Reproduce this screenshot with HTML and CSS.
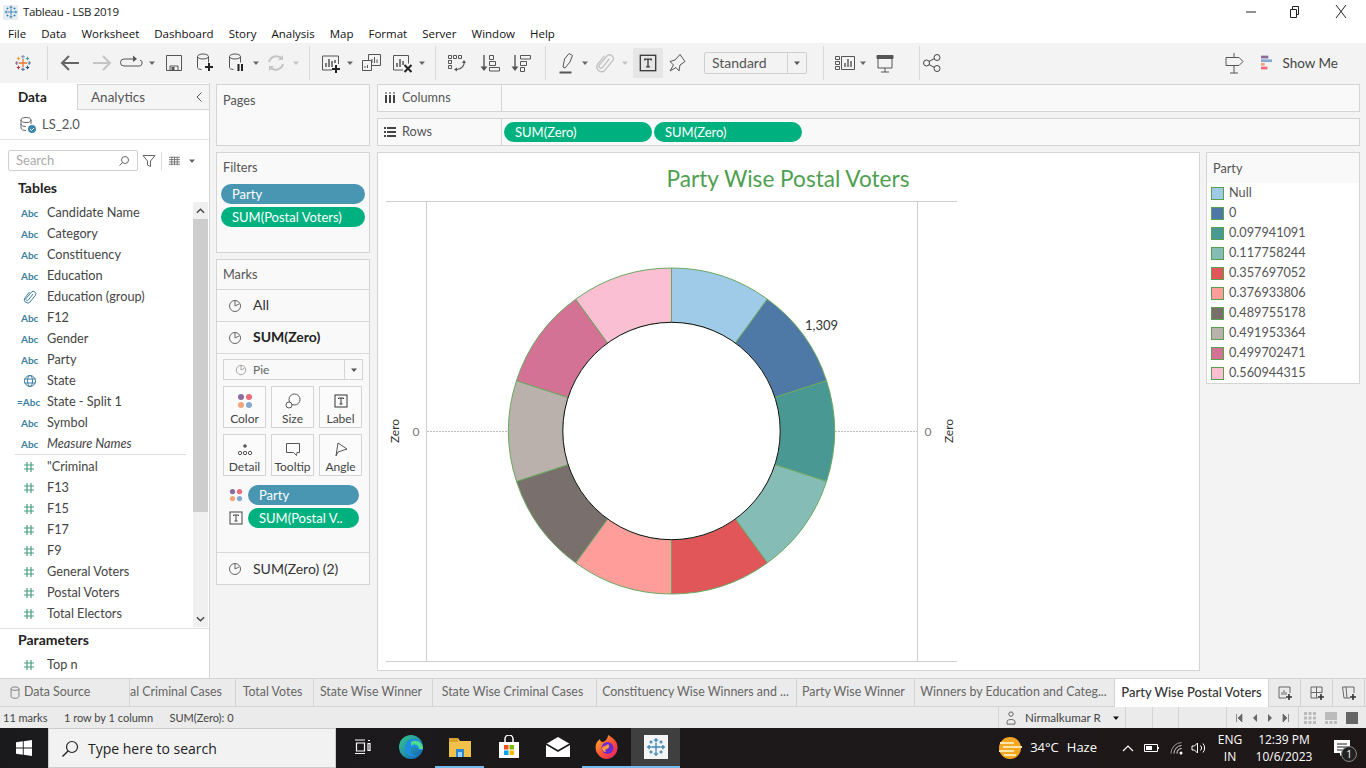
FILE: index.html
```html
<!DOCTYPE html>
<html lang="en">
<head>
<meta charset="utf-8">
<title>Tableau - LSB 2019</title>
<link rel="stylesheet" href="styles.css">
</head>
<body>
<svg class="sprite" aria-hidden="true">
  <symbol id="pie" viewBox="0 0 14 14"><circle cx="7" cy="7" r="5.5" fill="none" stroke="currentColor"/><path d="M7 7V1.5M7 7l4-2" fill="none" stroke="currentColor"/></symbol>
  <symbol id="label-t" viewBox="0 0 14 14"><rect x="1" y="1" width="12" height="12" fill="none" stroke="currentColor"/><path d="M4.5 5V4h5v1M7 4v6M5.5 10h3" fill="none" stroke="currentColor"/></symbol>
  <symbol id="dots" viewBox="0 0 16 16"><circle cx="4" cy="4" r="3" fill="#8a6c9f"/><circle cx="12" cy="4" r="3" fill="#ee6b7b"/><circle cx="4" cy="12" r="3" fill="#f1a57c"/><circle cx="12" cy="12" r="3" fill="#86a9d0"/></symbol>
  <symbol id="hash" viewBox="0 0 12 12"><path d="M4 1v10M8 1v10M1 4h10M1 8h10" fill="none" stroke="#4a9e80" stroke-width="1.2"/></symbol>
  <symbol id="clip" viewBox="0 0 14 14"><path d="M10 4 5.200 10.200a1.400 1.400 0 0 1-2.200-1.700L8.500 2a2.600 2.600 0 0 1 4 3.200L7 12a3.300 3.300 0 0 1-5.200-4L6.500 2" fill="none" stroke="currentColor"/></symbol>
  <symbol id="caret" viewBox="0 0 8 8"><path d="M1 2.500h6L4 6z" fill="currentColor"/></symbol>
  <symbol id="blue-logo" viewBox="0 0 16 16"><path d="M8 4.500v7M4.500 8h7M8 .8v3.400M6.300 2.500h3.400M8 11.800v3.400M6.300 13.500h3.400M2.500 6.300v3.400M.8 8h3.400M13.500 6.300v3.400M11.800 8h3.400M4 2.800v2.400M2.800 4h2.400M12 2.800v2.400M10.800 4h2.400M4 10.800v2.400M2.800 12h2.400M12 10.800v2.400M10.800 12h2.400" fill="none" stroke="#3d87b5" stroke-width="1.100"/></symbol>
  <symbol id="cyl" viewBox="0 0 12 16"><ellipse cx="6" cy="3" rx="4.500" ry="2" fill="none" stroke="currentColor"/><path d="M1.500 3v9c0 1.200 2 2 4.500 2s4.500-.8 4.500-2V3" fill="none" stroke="currentColor"/></symbol>
</svg>

<header class="titlebar">
  <span class="title-tile"><svg class="title-logo"><use href="#blue-logo"/></svg></span>
  <span class="title-text">Tableau - LSB 2019</span>
  <div class="win-controls">
    <svg class="win-btn" viewBox="0 0 46 24"><path d="M18 12h10" stroke="#222"/></svg>
    <svg class="win-btn" viewBox="0 0 46 24"><path d="M16.500 9.500h6v8h-6zM18.500 9.500v-3h6v8h-2" fill="none" stroke="#222"/></svg>
    <svg class="win-btn" viewBox="0 0 46 24"><path d="M16 5l10 13M26 5 16 18" stroke="#222" fill="none"/></svg>
  </div>
</header>

<nav class="menubar">
  <span>File</span><span>Data</span><span>Worksheet</span><span>Dashboard</span><span>Story</span><span>Analysis</span><span>Map</span><span>Format</span><span>Server</span><span>Window</span><span>Help</span>
</nav>

<div class="toolbar">
  <div class="tg tg-a">
    <svg class="ic18" viewBox="0 0 18 18"><path d="M9 5v8M5 9h8" stroke="#e8762c" stroke-width="1.300" fill="none"/><path d="M9 1v3.400M7.200 2.700h3.600" stroke="#7f9db9" stroke-width="1.200" fill="none"/><path d="M9 13.600V17M7.200 15.300h3.600" stroke="#5b7fa8" stroke-width="1.200" fill="none"/><path d="M2.700 7.200v3.600M1 9h3.400" stroke="#8a6c9f" stroke-width="1.200" fill="none"/><path d="M15.300 7.200v3.600M13.600 9H17" stroke="#5b7fa8" stroke-width="1.200" fill="none"/><path d="M4.500 2.800v3.400M2.800 4.500h3.400" stroke="#f0a04b" stroke-width="1.200" fill="none"/><path d="M13.500 2.800v3.400M11.800 4.500h3.400" stroke="#4a9e9e" stroke-width="1.200" fill="none"/><path d="M4.500 11.800v3.400M2.800 13.500h3.400" stroke="#c7303e" stroke-width="1.200" fill="none"/><path d="M13.500 11.800v3.400M11.800 13.500h3.400" stroke="#2a4f7f" stroke-width="1.200" fill="none"/></svg>
  </div>
  <div class="tg tg-b">
    <span class="slot w32"><svg class="ic24" viewBox="0 0 24 24"><path d="M21 12H5M11 5l-7 7 7 7" fill="none" stroke="#666" stroke-width="2"/></svg></span>
    <span class="slot w32"><svg class="ic24" viewBox="0 0 24 24"><path d="M3 12h16M13 5l7 7-7 7" fill="none" stroke="#c4c4c4" stroke-width="2"/></svg></span>
    <span class="slot w26"><svg class="ic24" viewBox="0 0 24 24"><path d="M15 8H5a3 3 0 0 0 0 7h14a3 3 0 0 0 2-6" fill="none" stroke="#555"/><path d="M14 4.500 18 8l-4 3z" fill="#555"/></svg></span>
    <span class="slot w16 car"><svg class="ic8"><use href="#caret"/></svg></span>
    <span class="slot w28"><svg class="ic24" viewBox="0 0 24 24"><path d="M4.500 4.500h15v15h-15zM8 19v-4h8v4" fill="#f3f3f3" stroke="#555"/><rect x="9.500" y="16" width="3" height="3" fill="#555"/></svg></span>
    <span class="slot w34"><svg class="ic24" viewBox="0 0 24 24"><ellipse cx="10" cy="5.500" rx="5.500" ry="2.500" fill="none" stroke="#555"/><path d="M4.500 5.500v11c0 1 1.500 2 4 2M15.500 5.500v6" fill="none" stroke="#555"/><path d="M16 12v8M12 16h8" stroke="#222" stroke-width="2"/></svg></span>
    <span class="slot w30"><svg class="ic24" viewBox="0 0 24 24"><ellipse cx="10" cy="5.500" rx="5.500" ry="2.500" fill="none" stroke="#555"/><path d="M4.500 5.500v11c0 1 1.500 2 4 2M15.500 5.500v6" fill="none" stroke="#555"/><path d="M13.500 13v7M17 13v7" stroke="#222" stroke-width="2"/></svg></span>
    <span class="slot w8 car"><svg class="ic8"><use href="#caret"/></svg></span>
    <span class="slot w32"><svg class="ic24" viewBox="0 0 24 24"><path d="M5 11a7.500 7.500 0 0 1 13-3M19 13a7.500 7.500 0 0 1-13 3" fill="none" stroke="#c4c4c4" stroke-width="2"/><path d="M19 4v5h-5M5 20v-5h5" fill="#c4c4c4"/></svg></span>
    <span class="slot w8 car-off"><svg class="ic8"><use href="#caret"/></svg></span>
  </div>
  <div class="tg tg-c">
    <span class="slot w32"><svg class="ic24" viewBox="0 0 24 24"><path d="M14 19H4.500V5h16v8" fill="none" stroke="#555"/><path d="M8 16v-4M11 16V8M14 16v-6M17 12V9" stroke="#555" stroke-width="1.500"/><path d="M18 14v8M14 18h8" stroke="#222" stroke-width="2"/></svg></span>
    <span class="slot w8 car"><svg class="ic8"><use href="#caret"/></svg></span>
    <span class="slot w34"><svg class="ic24" viewBox="0 0 24 24"><path d="M9.500 3.500h12v11h-12z" fill="#f3f3f3" stroke="#555"/><path d="M3.500 9.500h9v10h-9z" fill="#f3f3f3" stroke="#555"/><path d="M13 12V8M15.500 12V6M18 12V8.500M6 17v-2M8.500 17v-3" stroke="#555"/></svg></span>
    <span class="slot w28"><svg class="ic24" viewBox="0 0 24 24"><path d="M13 19H3.500V4.500h15v8" fill="none" stroke="#555"/><path d="M7 16v-4M10 16V8M13 14v-4" stroke="#555" stroke-width="1.500"/><path d="m14.500 14 7 7M21.500 14l-7 7" stroke="#222" stroke-width="2"/></svg></span>
    <span class="slot w12 car"><svg class="ic8"><use href="#caret"/></svg></span>
  </div>
  <div class="tg tg-d">
    <span class="slot w32"><svg class="ic24" viewBox="0 0 24 24"><path d="M3.500 4.500h3v3h-3zM8.500 4.500h3v3h-3zM13.500 4.500h3v3h-3zM3.500 9.500h3v3h-3zM3.500 14.500h3v3h-3z" fill="none" stroke="#555"/><path d="M19 10c1 4-2 8-7 8.500" fill="none" stroke="#555" stroke-width="1.200"/><path d="m17 12 2-3 2 3zM12 16.500v4l-3-2z" fill="#555"/></svg></span>
    <span class="slot w34"><svg class="ic24" viewBox="0 0 24 24"><path d="M6 4v13" fill="none" stroke="#555" stroke-width="1.400"/><path d="M2.500 15.500h7L6 20z" fill="#555"/><path d="M11.500 4.500h4v4h-4zM11.500 10.500h6v4h-6zM11.500 16.500h10v3.500h-10z" fill="none" stroke="#555"/></svg></span>
    <span class="slot w28"><svg class="ic24" viewBox="0 0 24 24"><path d="M6 4v13" fill="none" stroke="#555" stroke-width="1.400"/><path d="M2.500 15.500h7L6 20z" fill="#555"/><path d="M11.500 4.500h10v3.500h-10zM11.500 10.500h6v4h-6zM11.500 16.500h4v4h-4z" fill="none" stroke="#555"/></svg></span>
  </div>
  <div class="tg tg-e">
    <span class="slot w24"><svg class="ic24" viewBox="0 0 24 24"><path d="M7 16 8.500 8 13 2.500 16.500 4.500 14 11l-5 6z" fill="none" stroke="#555"/><path d="M3.500 21.500h12" stroke="#555" stroke-width="2"/></svg></span>
    <span class="slot w10 car"><svg class="ic8"><use href="#caret"/></svg></span>
    <span class="slot w30"><svg class="ic20 off" viewBox="0 0 14 14"><use href="#clip"/></svg></span>
    <span class="slot w10 car-off"><svg class="ic8"><use href="#caret"/></svg></span>
    <span class="slot w30 t-active"><svg class="ic18 dark" viewBox="0 0 14 14"><use href="#label-t"/></svg></span>
    <span class="slot w28"><svg class="ic24" viewBox="0 0 24 24"><path d="M15 3.500 10 9l-5 1.500 3.500 3.500L5 20l6-3.500 3 3.500 1-6 5-3.500z" fill="none" stroke="#555"/></svg></span>
    <div class="std-select"><span class="std-text">Standard</span><span class="std-caret"><svg class="ic8"><use href="#caret"/></svg></span></div>
  </div>
  <div class="tg tg-f">
    <span class="slot w26"><svg class="ic24" viewBox="0 0 24 24"><path d="M2.500 5.500h4v3h-4zM2.500 10.500h4v3h-4zM2.500 15.500h4v3h-4zM8.500 5.500h13v13h-13z" fill="none" stroke="#555"/><path d="M12 16v-4M15 16V8M18 16v-6" stroke="#555" stroke-width="1.400"/></svg></span>
    <span class="slot w10 car"><svg class="ic8"><use href="#caret"/></svg></span>
    <span class="slot w34"><svg class="ic24" viewBox="0 0 24 24"><path d="M4 4.500h16v3H4z" fill="#555" stroke="#555"/><path d="M5 7v10h14V7M12 17v4M8 21h8" fill="none" stroke="#555"/></svg></span>
  </div>
  <div class="tg tg-g">
    <span class="slot w24"><svg class="ic24" viewBox="0 0 24 24"><circle cx="6.500" cy="12" r="3" fill="none" stroke="#444"/><circle cx="17" cy="6.500" r="3" fill="none" stroke="#444"/><circle cx="17" cy="17.500" r="3" fill="none" stroke="#444"/><path d="M9 10.500l5.500-3M9 13.500l5.500 3" stroke="#444"/></svg></span>
  </div>
  <div class="tg-right">
    <span class="slot w26"><svg class="ic24" viewBox="0 0 24 24"><path d="M4 6.500h13l4 4-4 4H4zM12 2v4.500M12 14.500V22M8 22h8" fill="none" stroke="#555"/></svg></span>
    <svg class="showme-ic" viewBox="0 0 12 16"><rect x="0" width="8" height="3" fill="#8a6c9f"/><rect y="4" width="12" height="3" fill="#86a9d0"/><rect y="8" width="4" height="3" fill="#f1a57c"/><rect y="12" width="7" height="3" fill="#ee6b7b"/></svg>
    <span class="showme">Show Me</span>
  </div>
</div>

<main class="main">
  <aside class="sidebar">
    <div class="side-tabs">
      <div class="tab-data">Data</div>
      <div class="tab-analytics"><span>Analytics</span><svg class="chev" viewBox="0 0 8 12"><path d="M6.500 1.500 2 6l4.500 4.500" fill="none" stroke="#555"/></svg></div>
    </div>
    <div class="ds-row">
      <svg class="ds-ic" viewBox="0 0 18 18"><ellipse cx="7" cy="4" rx="5" ry="2.500" fill="none" stroke="#666"/><path d="M2 4v8c0 1.500 2 2.500 5 2.500M12 4v4M2 8c0 1.500 2 2.500 5 2.500" fill="none" stroke="#666"/><circle cx="13" cy="13" r="4" fill="#3f86ad"/><path d="m11 13 1.500 1.500L15 12" stroke="#fff" fill="none"/></svg>
      <span>LS_2.0</span>
    </div>
    <div class="search-row">
      <div class="search-box"><span>Search</span><svg class="search-ic" viewBox="0 0 12 12"><circle cx="7" cy="5" r="3.500" fill="none" stroke="#666"/><path d="M4.500 7.500 1.500 10.500" stroke="#666"/></svg></div>
      <svg class="funnel" viewBox="0 0 14 14"><path d="M1 1.500h12L8.500 7v5.500l-3-1.500V7z" fill="none" stroke="#666"/></svg>
      <span class="search-sep"></span>
      <svg class="list-ic" viewBox="0 0 14 10"><path d="M1 1h12M1 3.500h12M1 6h12M1 8.500h12M4 .5v9M7 .5v9M10 .5v9" stroke="#666" stroke-width=".9" fill="none"/></svg>
      <svg class="ic8 car"><use href="#caret"/></svg>
    </div>
    <h2 class="side-head">Tables</h2>
    <div class="fields-wrap">
      <div class="fields">
        <div class="field"><span class="abc">Abc</span><span>Candidate Name</span></div>
        <div class="field"><span class="abc">Abc</span><span>Category</span></div>
        <div class="field"><span class="abc">Abc</span><span>Constituency</span></div>
        <div class="field"><span class="abc">Abc</span><span>Education</span></div>
        <div class="field"><span class="ftype"><svg class="ic14 blue" viewBox="0 0 14 14"><use href="#clip"/></svg></span><span>Education (group)</span></div>
        <div class="field"><span class="abc">Abc</span><span>F12</span></div>
        <div class="field"><span class="abc">Abc</span><span>Gender</span></div>
        <div class="field"><span class="abc">Abc</span><span>Party</span></div>
        <div class="field"><span class="ftype"><svg class="ic14" viewBox="0 0 14 14"><circle cx="7" cy="7" r="5.500" fill="none" stroke="#3d7f9e"/><ellipse cx="7" cy="7" rx="2.500" ry="5.500" fill="none" stroke="#3d7f9e"/><path d="M1.500 5h11M1.500 9h11" stroke="#3d7f9e"/></svg></span><span>State</span></div>
        <div class="field"><span class="abc abc-calc">=Abc</span><span>State - Split 1</span></div>
        <div class="field"><span class="abc">Abc</span><span>Symbol</span></div>
        <div class="field"><span class="abc">Abc</span><em>Measure Names</em></div>
        <div class="field-hr"></div>
        <div class="field"><span class="ftype"><svg class="ic12"><use href="#hash"/></svg></span><span>"Criminal</span></div>
        <div class="field"><span class="ftype"><svg class="ic12"><use href="#hash"/></svg></span><span>F13</span></div>
        <div class="field"><span class="ftype"><svg class="ic12"><use href="#hash"/></svg></span><span>F15</span></div>
        <div class="field"><span class="ftype"><svg class="ic12"><use href="#hash"/></svg></span><span>F17</span></div>
        <div class="field"><span class="ftype"><svg class="ic12"><use href="#hash"/></svg></span><span>F9</span></div>
        <div class="field"><span class="ftype"><svg class="ic12"><use href="#hash"/></svg></span><span>General Voters</span></div>
        <div class="field"><span class="ftype"><svg class="ic12"><use href="#hash"/></svg></span><span>Postal Voters</span></div>
        <div class="field"><span class="ftype"><svg class="ic12"><use href="#hash"/></svg></span><span>Total Electors</span></div>
      </div>
      <div class="scrollbar">
        <div class="sb-btn"><svg class="sb-ic" viewBox="0 0 10 6"><path d="M1 5l4-4 4 4" fill="none" stroke="#444" stroke-width="1.500"/></svg></div>
        <div class="sb-thumb"></div>
        <div class="sb-track"></div>
        <div class="sb-btn"><svg class="sb-ic" viewBox="0 0 10 6"><path d="M1 1l4 4 4-4" fill="none" stroke="#444" stroke-width="1.500"/></svg></div>
      </div>
    </div>
    <div class="params">
      <h2 class="side-head param-head">Parameters</h2>
      <div class="field"><span class="ftype"><svg class="ic12"><use href="#hash"/></svg></span><span>Top n</span></div>
    </div>
  </aside>

  <section class="cards">
    <div class="card card-pages"><div class="card-title">Pages</div></div>
    <div class="card card-filters">
      <div class="card-title filters-title">Filters</div>
      <div class="filter-pills">
        <div class="pill pill-blue">Party</div>
        <div class="pill pill-green">SUM(Postal Voters)</div>
      </div>
    </div>
    <div class="card card-marks">
      <div class="marks-head">Marks</div>
      <div class="marks-row"><svg class="ic14"><use href="#pie"/></svg><span>All</span></div>
      <div class="marks-row marks-bold"><svg class="ic14"><use href="#pie"/></svg><span>SUM(Zero)</span></div>
      <div class="marks-body">
        <div class="mark-select">
          <span class="mark-type"><svg class="ic12 light"><use href="#pie"/></svg>Pie</span>
          <span class="mark-caret"><svg class="ic8"><use href="#caret"/></svg></span>
        </div>
        <div class="mark-grid">
          <div class="mbtn"><svg class="ic16"><use href="#dots"/></svg><span>Color</span></div>
          <div class="mbtn"><svg class="ic16" viewBox="0 0 16 16"><circle cx="9.500" cy="6.500" r="5.500" fill="none" stroke="#555"/><circle cx="4" cy="12" r="3" fill="#fff" stroke="#555"/></svg><span>Size</span></div>
          <div class="mbtn"><svg class="ic14 dark mlabel" viewBox="0 0 14 14"><use href="#label-t"/></svg><span>Label</span></div>
          <div class="mbtn"><svg class="ic16" viewBox="0 0 16 16"><circle cx="8" cy="5" r="1.800" fill="#555"/><circle cx="3" cy="12" r="1.700" fill="none" stroke="#555"/><circle cx="8" cy="12" r="1.700" fill="none" stroke="#555"/><circle cx="13" cy="12" r="1.700" fill="none" stroke="#555"/></svg><span>Detail</span></div>
          <div class="mbtn"><svg class="ic16" viewBox="0 0 16 16"><path d="M1.500 2.500h13v9H12l-.5 3-3-3h-7z" fill="none" stroke="#555"/></svg><span>Tooltip</span></div>
          <div class="mbtn"><svg class="ic16" viewBox="0 0 16 16"><path d="M5 2l9 6-9 3-2 4z" fill="none" stroke="#555"/></svg><span>Angle</span></div>
        </div>
        <div class="mark-pill"><svg class="ic14"><use href="#dots"/></svg><div class="pill pill-blue">Party</div></div>
        <div class="mark-pill"><svg class="ic14 label-ic"><use href="#label-t"/></svg><div class="pill pill-green">SUM(Postal V..</div></div>
      </div>
      <div class="marks-row marks-last"><svg class="ic14"><use href="#pie"/></svg><span>SUM(Zero) (2)</span></div>
    </div>
  </section>

  <section class="work">
    <div class="shelf shelf-cols">
      <div class="shelf-label"><svg class="ic12 shelf-ic" viewBox="0 0 12 12"><path d="M2 3v8M6 3v8M10 3v8" stroke="#444" stroke-width="2"/><path d="M2 0v2M6 0v2M10 0v2" stroke="#444"/></svg>Columns</div>
    </div>
    <div class="shelf shelf-rows">
      <div class="shelf-label"><svg class="ic12 shelf-ic" viewBox="0 0 12 12"><path d="M3 2h9M3 6h9M3 10h9" stroke="#444" stroke-width="2"/><path d="M0 2h2M0 6h2M0 10h2" stroke="#444" stroke-width="2"/></svg>Rows</div>
      <div class="shelf-pills">
        <div class="pill pill-green pill-shelf">SUM(Zero)</div>
        <div class="pill pill-green pill-shelf">SUM(Zero)</div>
      </div>
    </div>
    <div class="view-row">
      <div class="view">
        <svg class="chart" viewBox="378 153 821 517">
          <text class="chart-title" x="788" y="187">Party Wise Postal Voters</text>
          <path class="axis" d="M386 201.500H957M386 661.500H957M426.500 201V661M917.500 201V661"/>
          <path class="zero" d="M427 431.500H508M835 431.500H917"/>
          <text class="axis-t" transform="translate(399 431) rotate(-90)">Zero</text>
          <text class="axis-n" x="416" y="436">0</text>
          <text class="axis-n" x="928" y="436">0</text>
          <text class="axis-t" transform="translate(953 431) rotate(-90)">Zero</text>
          <g transform="translate(671.500 431)">
            <g class="wedges">
              <path fill="#a0cbe8" d="M0-163A163 163 0 0 1 95.810-131.870L63.890-87.940A108.700 108.700 0 0 0 0-108.700Z"/>
              <path fill="#4e79a7" d="M95.810-131.870A163 163 0 0 1 155.020-50.370L103.380-33.590A108.700 108.700 0 0 0 63.890-87.940Z"/>
              <path fill="#499894" d="M155.020-50.370A163 163 0 0 1 155.020 50.370L103.380 33.590A108.700 108.700 0 0 0 103.380-33.590Z"/>
              <path fill="#86bcb6" d="M155.020 50.370A163 163 0 0 1 95.810 131.870L63.890 87.940A108.700 108.700 0 0 0 103.380 33.590Z"/>
              <path fill="#e15759" d="M95.810 131.870A163 163 0 0 1 0 163L0 108.700A108.700 108.700 0 0 0 63.890 87.940Z"/>
              <path fill="#ff9d9a" d="M0 163A163 163 0 0 1-95.810 131.870L-63.890 87.940A108.700 108.700 0 0 0 0 108.700Z"/>
              <path fill="#79706e" d="M-95.810 131.870A163 163 0 0 1-155.020 50.370L-103.380 33.590A108.700 108.700 0 0 0-63.890 87.940Z"/>
              <path fill="#bab0ac" d="M-155.020 50.370A163 163 0 0 1-155.020-50.370L-103.380-33.590A108.700 108.700 0 0 0-103.380 33.590Z"/>
              <path fill="#d37295" d="M-155.020-50.370A163 163 0 0 1-95.810-131.870L-63.890-87.940A108.700 108.700 0 0 0-103.380-33.590Z"/>
              <path fill="#fabfd2" d="M-95.810-131.870A163 163 0 0 1 0-163L0-108.700A108.700 108.700 0 0 0-63.890-87.940Z"/>
            </g>
            <circle class="hole" r="108.700"/>
          </g>
          <text class="mark-label" x="805" y="330">1,309</text>
        </svg>
      </div>
      <div class="legend">
        <div class="legend-head">Party</div>
        <div class="legend-row"><i class="sw sw1"></i>Null</div>
        <div class="legend-row"><i class="sw sw2"></i>0</div>
        <div class="legend-row"><i class="sw sw3"></i>0.097941091</div>
        <div class="legend-row"><i class="sw sw4"></i>0.117758244</div>
        <div class="legend-row"><i class="sw sw5"></i>0.357697052</div>
        <div class="legend-row"><i class="sw sw6"></i>0.376933806</div>
        <div class="legend-row"><i class="sw sw7"></i>0.489755178</div>
        <div class="legend-row"><i class="sw sw8"></i>0.491953364</div>
        <div class="legend-row"><i class="sw sw9"></i>0.499702471</div>
        <div class="legend-row"><i class="sw sw10"></i>0.560944315</div>
      </div>
    </div>
  </section>
</main>

<div class="sheet-tabs">
  <div class="stab stab-ds"><svg class="ic14 grey" viewBox="0 0 12 16"><use href="#cyl"/></svg>Data Source</div>
  <div class="stab stab-clip"><span>al Criminal Cases</span></div>
  <div class="stab s-votes">Total Votes</div>
  <div class="stab s-swin">State Wise Winner</div>
  <div class="stab s-scrim">State Wise Criminal Cases</div>
  <div class="stab s-const">Constituency Wise Winners and ...</div>
  <div class="stab s-pwin">Party Wise Winner</div>
  <div class="stab s-edu">Winners by Education and Categ...</div>
  <div class="stab stab-active">Party Wise Postal Voters</div>
  <div class="stab-add"><svg class="ic16" viewBox="0 0 16 16"><path d="M9 13H2V2h11v6" fill="none" stroke="#666"/><path d="M5 10V7M7 10V5M9 10V7" stroke="#666"/><path d="M12 9v6M9 12h6" stroke="#333" stroke-width="1.600"/></svg></div>
  <div class="stab-add"><svg class="ic16" viewBox="0 0 16 16"><path d="M9 13H2V2h11v6M7.500 2v11M2 7.500h11" fill="none" stroke="#666"/><path d="M12 9v6M9 12h6" stroke="#333" stroke-width="1.600"/></svg></div>
  <div class="stab-add"><svg class="ic16" viewBox="0 0 16 16"><path d="M9 13H3L1.500 2H13v6M5 2l1 11" fill="none" stroke="#666"/><path d="M12 9v6M9 12h6" stroke="#333" stroke-width="1.600"/></svg></div>
</div>

<footer class="status">
  <div class="status-left"><span>11 marks</span><span>1 row by 1 column</span><span>SUM(Zero): 0</span></div>
  <div class="status-right">
    <div class="st-user"><svg class="ic14" viewBox="0 0 14 16"><circle cx="7" cy="3.500" r="2.500" fill="none" stroke="#555"/><path d="M2.500 15v-3c0-3 9-3 9 0v3z" fill="none" stroke="#555"/></svg><span>Nirmalkumar R</span><svg class="ic8 black"><use href="#caret"/></svg></div>
    <div class="st-cell w27"></div>
    <div class="st-cell w26"></div>
    <div class="st-cell w48"></div>
    <div class="st-nav">
      <svg class="nav-ic" viewBox="0 0 8 10"><path d="M1.500 1v8M7 1 3 5l4 4z" fill="#666" stroke="#666" stroke-width=".7"/></svg>
      <svg class="nav-ic" viewBox="0 0 8 10"><path d="M6 1 2 5l4 4z" fill="#666"/></svg>
      <svg class="nav-ic" viewBox="0 0 8 10"><path d="m2 1 4 4-4 4z" fill="#666"/></svg>
      <svg class="nav-ic" viewBox="0 0 8 10"><path d="M6.500 1v8M1 1l4 4-4 4z" fill="#666" stroke="#666" stroke-width=".7"/></svg>
    </div>
    <div class="st-views">
      <svg class="view-ic" viewBox="0 0 12 12"><path d="M0 1.500h12M0 6h12M0 10.500h12" stroke="#bbb" stroke-width="3" stroke-dasharray="3 1.500"/></svg>
      <svg class="view-ic" viewBox="0 0 12 12"><rect width="12" height="8" fill="#bbb"/><path d="M0 10.500h12" stroke="#bbb" stroke-width="3" stroke-dasharray="3 1.500"/></svg>
      <svg class="view-ic" viewBox="0 0 12 12"><rect width="12" height="12" fill="#666"/></svg>
    </div>
  </div>
</footer>

<div class="taskbar">
  <div class="tb-start"><svg class="win-logo" viewBox="0 0 16 16"><path d="M0 2.300 6.800 1.300V7.600H0zM7.700 1.200 16 0v7.600H7.700zM0 8.400h6.800v6.300L0 13.700zM7.700 8.400H16V16l-8.300-1.200z" fill="#fff"/></svg></div>
  <div class="tb-search"><svg class="tb-mag" viewBox="0 0 18 18"><circle cx="11" cy="7" r="5.500" fill="none" stroke="#222" stroke-width="1.200"/><path d="M7 11 1.500 16.500" stroke="#222" stroke-width="1.400"/></svg><span>Type here to search</span></div>
  <div class="tb-apps">
    <span class="app app-view"><svg class="ic20" viewBox="0 0 20 20"><path d="M3 3h10M3 16.500h10M4.500 6h8v8h-8zM16 3.500h2M16 6.500h2v7h-2z" fill="none" stroke="#fff" stroke-width="1.200"/></svg></span>
    <span class="app app-edge"><svg class="ic26" viewBox="0 0 26 26"><defs><linearGradient id="edgeg" x1="0" y1="0" x2="1" y2="1"><stop offset="0" stop-color="#36c98a"/><stop offset="1" stop-color="#1060c0"/></linearGradient></defs><circle cx="13" cy="13" r="12" fill="url(#edgeg)"/><path d="M25 14c0-6-5-9-10-9-6 0-8 5-8 9 0 6 6 10 12 8-6 0-8-5-5-8 3-2 6 0 6 2h5z" fill="#1e8de0"/><path d="M13 12c3-3 8-1 8 3h4c0-7-7-10-12-7z" fill="#4fdc8f"/></svg></span>
    <span class="app app-run"><svg class="ic24" viewBox="0 0 24 24"><path d="M1 3h9l2 3h11v16H1z" fill="#f0c14b"/><path d="M1 3h9v4H1z" fill="#d9a22c"/><path d="M8 14h8v8H8z" fill="#2f86d0"/><path d="M10 17h4v5h-4z" fill="#9fd2f5"/></svg></span>
    <span class="app app-store"><svg class="ic24" viewBox="0 0 24 24"><path d="M2 7h20v16H2z" fill="#fff"/><path d="M8 7V4a4 4 0 0 1 8 0v3" fill="none" stroke="#fff" stroke-width="1.500"/><rect x="7" y="10" width="4.500" height="4.500" fill="#f25022"/><rect x="12.500" y="10" width="4.500" height="4.500" fill="#7fba00"/><rect x="7" y="15.500" width="4.500" height="4.500" fill="#00a4ef"/><rect x="12.500" y="15.500" width="4.500" height="4.500" fill="#ffb900"/></svg></span>
    <span class="app app-mail"><svg class="ic26" viewBox="0 0 26 26"><path d="M1 10 13 3l12 7v13H1z" fill="#fff"/><path d="m1 10 12 7 12-7" fill="none" stroke="#1a1a1a" stroke-width="1.600"/></svg></span>
    <span class="app app-run app-fox"><svg class="ic26" viewBox="0 0 26 26"><defs><linearGradient id="foxg" x1="0" y1="0" x2="1" y2="1"><stop offset="0" stop-color="#ffbd2e"/><stop offset=".5" stop-color="#ff5634"/><stop offset="1" stop-color="#e3186e"/></linearGradient></defs><path d="M13 25a11.500 11.500 0 0 1-10-17l3-3c0 2 1 3 3 3 3-1 5-4 5-7 4 2 8 5 9 9a11.500 11.500 0 0 1-10 15z" fill="url(#foxg)"/><circle cx="13.500" cy="14" r="6" fill="#6c2bd0"/><path d="M8 14c2-3 5-2 6-4 2 2 1 4-1 5-2 0-2 1-1 3-3 0-4-2-4-4z" fill="#ff9a3c"/></svg></span>
    <span class="app app-tab"><span class="tile"><svg class="ic20" viewBox="0 0 16 16"><use href="#blue-logo"/></svg></span></span>
  </div>
  <div class="tb-tray">
    <svg class="ic24" viewBox="0 0 24 24"><circle cx="12" cy="12" r="11" fill="#f5a623"/><path d="M2 7h14M5 11h19M1 15h15M6 19h12" stroke="#fde6a8" stroke-width="1.800"/></svg>
    <span class="tray-temp">34°C</span><span class="tray-haze">Haze</span>
    <svg class="tray-chev" viewBox="0 0 12 8"><path d="m1 7 5-5 5 5" fill="none" stroke="#fff" stroke-width="1.200"/></svg>
    <svg class="tray-bat" viewBox="0 0 16 10"><path d="M.5 1.500h13v7H.5z" fill="none" stroke="#fff"/><path d="M14.500 4v2" stroke="#fff"/><rect x="2" y="3" width="6" height="4" fill="#fff"/></svg>
    <svg class="tray-wifi" viewBox="0 0 14 14"><path d="M1 12.500A11 11 0 0 1 11.500 1.500" fill="none" stroke="#999"/><path d="M4 12.500A8 8 0 0 1 11.500 4.500" fill="none" stroke="#ccc"/><path d="M7 12.500A5 5 0 0 1 11.500 7.500" fill="none" stroke="#eee"/><circle cx="11" cy="12" r="1.500" fill="#fff"/></svg>
    <svg class="tray-spk" viewBox="0 0 16 14"><path d="M1 5h2.500l3-3v10l-3-3H1zM9.500 4.500a3.500 3.500 0 0 1 0 5M12 2.500a7 7 0 0 1 0 9" fill="none" stroke="#fff"/></svg>
    <div class="tray-lang"><span>ENG</span><span>IN</span></div>
    <div class="tray-clock"><span>12:39 PM</span><span>10/6/2023</span></div>
    <div class="tray-note"><svg class="ic20" viewBox="0 0 20 20"><path d="M2 2h16v13H11l-3 3v-3H2z" fill="#fff"/><path d="M5 6h10M5 9h10M5 12h6" stroke="#1a1a1a"/></svg><span class="note-badge">1</span></div>
  </div>
</div>
</body>
</html>
```

FILE: styles.css
```css
* { box-sizing: border-box; }
html, body { margin: 0; padding: 0; }
body {
  width: 1366px; height: 768px; overflow: hidden;
  display: flex; flex-direction: column;
  background: #f3f3f3; color: #333;
  font: 12.7px/1.2 Lato, "Open Sans", sans-serif;
}
svg { display: block; flex: none; }
.sprite { position: absolute; width: 0; height: 0; }
h2 { margin: 0; }

.ic8 { width: 8px; height: 8px; }
.ic12 { width: 12px; height: 12px; }
.ic14 { width: 14px; height: 14px; color: #666; }
.ic16 { width: 16px; height: 16px; color: #555; }
.ic18 { width: 18px; height: 18px; }
.ic20 { width: 20px; height: 20px; }
.ic24 { width: 24px; height: 24px; }
.ic26 { width: 26px; height: 26px; }
.off { color: #c4c4c4; }
.car { color: #666; }
.car-off { color: #c4c4c4; }
.light { color: #999; }
.black { color: #111; }
.blue { color: #3d7f9e; }
.grey { color: #777; }
.dark { color: #333; }
.mlabel { margin: 1px 0; }

/* title + menu */
.titlebar { height: 24px; background: #fff; display: flex; align-items: center; font-family: "Open Sans", sans-serif; font-size: 11.5px; letter-spacing: -.3px; color: #222; flex: none; }
.title-tile { width: 15px; height: 15px; margin: 0 5px 0 3px; background: #e8edf1; display: flex; align-items: center; justify-content: center; }
.title-logo { width: 14px; height: 14px; }
.win-controls { margin-left: auto; display: flex; }
.win-btn { width: 46px; height: 24px; }
.menubar { height: 19px; background: #fff; flex: none; display: flex; gap: 15px; padding: 1px 0 0 8px; align-items: center; font-family: "Open Sans", sans-serif; font-size: 11.5px; color: #111; }

/* toolbar */
.toolbar { height: 40px; flex: none; display: flex; background: #f3f3f3; align-items: stretch; }
.tg { display: flex; align-items: center; position: relative; border-right: 1px solid #d9d9d9; margin: 3px 0; flex: none; }
.tg-a { width: 48px; justify-content: center; padding-right: 1px; }
.tg-b { width: 262px; padding-left: 6px; }
.tg-c { width: 126px; padding-left: 4px; }
.tg-d { width: 110px; padding-left: 5px; }
.tg-e { width: 278px; padding-left: 10px; }
.tg-f { width: 96px; padding-left: 8px; }
.tg-g { width: 40px; border-right: 0; }
.slot { display: flex; align-items: center; justify-content: center; height: 30px; flex: none; }
.w8 { width: 8px; } .w10 { width: 10px; } .w12 { width: 12px; } .w16 { width: 16px; }
.w24 { width: 24px; } .w26 { width: 26px; } .w28 { width: 28px; } .w30 { width: 30px; }
.w32 { width: 32px; } .w34 { width: 34px; }
.t-active { background: #e6e6e6; margin-left: 3px; }
.std-select { margin-left: 13px; width: 103px; height: 22px; display: flex; border: 1px solid #d0d0d0; background: #f3f3f3; border-radius: 2px; color: #555; }
.std-text { flex: 1; padding-left: 7px; font-size: 14px; line-height: 20px; }
.std-caret { width: 19px; border-left: 1px solid #d0d0d0; display: flex; align-items: center; justify-content: center; color: #555; }
.tg-right { margin-left: auto; display: flex; align-items: center; padding-right: 28px; }
.showme-ic { width: 11px; height: 16px; margin: 0 10px 0 14px; }
.showme { font-size: 13.5px; color: #444; }

/* main */
.main { height: 595px; flex: none; display: flex; background: #f3f3f3; }
.sidebar { width: 210px; flex: none; background: #fff; border-right: 1px solid #d4d4d4; display: flex; flex-direction: column; padding-top: 1px; }
.side-tabs { display: flex; height: 26px; flex: none; }
.tab-data { width: 77px; padding-left: 18px; font-weight: 700; font-size: 13.5px; line-height: 26px; color: #222; background: #fff; }
.tab-analytics { flex: 1; background: #f5f5f5; border: 1px solid #d4d4d4; border-right: 0; display: flex; align-items: center; justify-content: space-between; padding: 0 6px 0 13px; font-size: 13.5px; color: #555; }
.chev { width: 8px; height: 12px; }
.ds-row { height: 30px; flex: none; display: flex; align-items: center; padding-left: 19px; gap: 5px; color: #555; border-bottom: 1px solid #e4e4e4; font-size: 13px; }
.ds-ic { width: 18px; height: 18px; }
.search-row { display: flex; align-items: center; height: 21px; margin-top: 10px; padding-left: 8px; flex: none; }
.search-box { width: 130px; height: 21px; border: 1px solid #cfcfcf; border-radius: 2px; display: flex; align-items: center; justify-content: space-between; padding: 0 7px; color: #aaa; font-size: 13px; }
.search-ic { width: 12px; height: 12px; }
.funnel { width: 14px; height: 14px; margin-left: 4px; }
.search-sep { width: 1px; height: 18px; background: #ddd; margin: 0 6px 0 5px; }
.list-ic { width: 13px; height: 10px; margin-right: 7px; }
.side-head { height: 20px; margin-top: 7px; padding-left: 18px; font-size: 14px; font-weight: 700; color: #222; line-height: 20px; flex: none; }
.fields-wrap { display: flex; height: 425px; flex: none; margin-top: 4px; }
.fields { width: 193px; flex: none; }
.field { height: 21px; display: flex; align-items: center; color: #444; font-size: 12.7px; }
.abc { width: 47px; padding-left: 21px; font-size: 10px; color: #3d7f9e; font-weight: 700; flex: none; }
.abc-calc { padding-left: 17px; }
.ftype { width: 47px; display: flex; justify-content: flex-start; padding-left: 23px; flex: none; }
.field-hr { height: 1px; background: #ddd; margin: 0 7px 1px 15px; }
.scrollbar { width: 15px; background: #f0f0f0; display: flex; flex-direction: column; }
.sb-btn { height: 17px; display: flex; align-items: center; justify-content: center; flex: none; }
.sb-thumb { height: 293px; background: #cdcdcd; flex: none; }
.sb-track { flex: 1; }
.sb-ic { width: 9px; height: 6px; }
.params { border-top: 1px solid #e0e0e0; margin-top: 1px; }
.param-head { margin-top: 1px; height: 20px; }
.params .field { margin-top: 4px; }

/* cards */
.cards { width: 154px; margin-left: 6px; padding-top: 1px; display: flex; flex-direction: column; gap: 6px; flex: none; }
.card { background: #f9f9f9; border: 1px solid #d4d4d4; flex: none; }
.card-pages { height: 62px; }
.card-filters { height: 101px; }
.card-marks { height: 326px; }
.card-title { padding: 8px 0 0 6px; color: #555; }
.filters-title { padding-top: 7px; }
.filter-pills { margin: 9px 4px 0; display: flex; flex-direction: column; gap: 3px; }
.pill { height: 20px; border-radius: 10px; color: #fff; line-height: 20px; padding-left: 11px; font-size: 13px; }
.pill-blue { background: #4996b2; }
.pill-green { background: #00b180; }
.marks-head { height: 30px; padding: 7px 0 0 6px; color: #555; border-bottom: 1px solid #d9d9d9; }
.marks-row { height: 32px; display: flex; align-items: center; gap: 11px; padding-left: 11px; border-bottom: 1px solid #d9d9d9; font-size: 14px; color: #333; }
.marks-bold { font-weight: 700; color: #222; }
.marks-body { height: 199px; border-bottom: 1px solid #d9d9d9; padding: 5px 6px 0; }
.marks-last { border-bottom: 0; }
.mark-select { width: 140px; height: 21px; border: 1px solid #d4d4d4; background: #f9f9f9; display: flex; color: #666; font-size: 12px; }
.mark-type { flex: 1; display: flex; align-items: center; gap: 6px; padding: 1px 0 0 11px; }
.mark-caret { width: 18px; border-left: 1px solid #d4d4d4; display: flex; align-items: center; justify-content: center; color: #555; }
.mark-grid { display: grid; grid-template-columns: 43px 43px 43px; grid-auto-rows: 42px; column-gap: 5px; row-gap: 6px; margin-top: 6px; }
.mbtn { border: 1px solid #d4d4d4; background: #fbfbfb; display: flex; flex-direction: column; align-items: center; padding-top: 6px; font-size: 12px; color: #444; gap: 3px; }
.mark-pill { display: flex; align-items: center; gap: 5px; margin-top: 3px; padding-left: 6px; }
.mark-grid + .mark-pill { margin-top: 9px; }
.mark-pill .pill { width: 111px; flex: none; }
.label-ic { color: #444; }

/* shelves + view */
.work { width: 983px; margin-left: 7px; padding-top: 1px; display: flex; flex-direction: column; flex: none; }
.shelf { display: flex; background: #f9f9f9; border: 1px solid #d4d4d4; flex: none; height: 28px; margin-bottom: 6px; }
.shelf-label { width: 124px; border-right: 1px solid #d4d4d4; display: flex; align-items: center; gap: 6px; padding-left: 6px; color: #555; flex: none; }
.shelf-pills { display: flex; gap: 2px; padding: 3px 0 0 2px; }
.pill-shelf { width: 148px; }
.view-row { display: flex; gap: 6px; align-items: flex-start; }
.view { width: 823px; height: 519px; border: 1px solid #d4d4d4; background: #fff; flex: none; }
.chart { width: 821px; height: 517px; }
.chart-title { font: 22.6px Lato, sans-serif; fill: #4e9f50; text-anchor: middle; }
.axis { stroke: #cfcfcf; fill: none; }
.zero { stroke: #bdbdbd; stroke-dasharray: 2 1; fill: none; }
.axis-t { font: 12px Lato, sans-serif; fill: #333; text-anchor: middle; }
.axis-n { font: 12px Lato, sans-serif; fill: #777; text-anchor: middle; }
.wedges path { stroke: #6aa860; stroke-width: 1; }
.hole { fill: #fff; stroke: #111; stroke-width: 1; }
.mark-label { font: 13px Lato, sans-serif; fill: #333; }
.legend { width: 154px; height: 232px; background: #fff; border: 1px solid #d4d4d4; flex: none; }
.legend-head { height: 30px; background: #f9f9f9; padding: 8px 0 0 6px; color: #555; }
.legend-row { height: 20px; display: flex; align-items: center; gap: 5px; padding-left: 4px; color: #555; }
.sw { width: 13px; height: 13px; border: 1px solid #59a14f; display: block; flex: none; }
.sw1 { background: #a0cbe8; } .sw2 { background: #4e79a7; } .sw3 { background: #499894; }
.sw4 { background: #86bcb6; } .sw5 { background: #e15759; } .sw6 { background: #ff9d9a; }
.sw7 { background: #79706e; } .sw8 { background: #bab0ac; } .sw9 { background: #d37295; }
.sw10 { background: #fabfd2; }

/* sheet tabs */
.sheet-tabs { height: 29px; flex: none; display: flex; background: #ebebeb; border-top: 1px solid #d4d4d4; border-bottom: 1px solid #d4d4d4; font-size: 12.4px; color: #666; }
.stab { display: flex; align-items: center; justify-content: center; border-right: 1px solid #d4d4d4; flex: none; white-space: nowrap; padding-right: 4px; }
.stab-ds { width: 130px; justify-content: flex-start; padding: 0 0 0 8px; gap: 2px; }
.stab-clip { width: 106px; justify-content: flex-end; padding-right: 13px; }
.s-votes { width: 78px; }
.s-swin { width: 119px; }
.s-scrim { width: 164px; }
.s-const { width: 200px; padding-right: 2px; }
.s-pwin { width: 118px; }
.s-edu { width: 200px; padding-right: 2px; }
.stab-active { width: 154px; background: #fff; color: #333; font-size: 13px; font-weight: 500; height: 28px; padding-right: 0; }
.stab-add { width: 32px; display: flex; align-items: center; justify-content: center; border-right: 1px solid #d4d4d4; flex: none; }

/* status */
.status { height: 21px; flex: none; display: flex; justify-content: space-between; background: #ebebeb; font-size: 11px; color: #444; }
.status-left { display: flex; gap: 16.5px; padding-left: 3px; align-items: center; }
.status-right { display: flex; height: 21px; }
.st-user { width: 128px; display: flex; align-items: center; gap: 7px; padding-left: 5px; border-left: 1px solid #d4d4d4; border-right: 1px solid #d4d4d4; font-size: 11.6px; }
.st-user .ic8 { margin-left: 4px; }
.st-cell { border-right: 1px solid #d4d4d4; }
.w27 { width: 27px; } .w48 { width: 48px; }
.st-nav { width: 72px; display: flex; align-items: center; justify-content: space-around; padding: 0 4px; border-right: 1px solid #d4d4d4; }
.nav-ic { width: 8px; height: 10px; }
.st-views { width: 67px; display: flex; align-items: center; gap: 9px; padding-left: 5px; }
.view-ic { width: 12px; height: 12px; }

/* taskbar */
.taskbar { height: 40px; flex: none; display: flex; background: linear-gradient(90deg, #1a1a1c, #1e1718); color: #fff; font-family: "Open Sans", sans-serif; }
.tb-start { width: 48px; display: flex; align-items: center; justify-content: center; }
.win-logo { width: 16px; height: 16px; }
.tb-search { width: 288px; background: #f2f2f2; border: 1px solid #ccc; color: #222; display: flex; align-items: center; padding: 2px 0 0 12px; gap: 9px; font-size: 14px; }
.tb-mag { width: 18px; height: 18px; }
.tb-apps { display: flex; margin-left: 2px; }
.app { width: 49px; height: 40px; display: flex; align-items: center; justify-content: center; flex: none; border-bottom: 2px solid transparent; }
.app-view { width: 48px; }
.app-run { border-bottom-color: #76b9ed; }
.app-tab { background: #3f3f3f; border-bottom-color: #76b9ed; }
.tile { width: 24px; height: 24px; background: #f4f4f4; display: flex; align-items: center; justify-content: center; }
.tb-tray { margin-left: auto; display: flex; align-items: center; font-size: 13px; }
.tray-temp { margin-left: 8px; }
.tray-haze { margin-left: 8px; }
.tray-chev { width: 12px; height: 8px; margin-left: 25px; }
.tray-bat { width: 16px; height: 10px; margin-left: 10px; }
.tray-wifi { width: 14px; height: 14px; margin-left: 10px; }
.tray-spk { width: 16px; height: 14px; margin-left: 7px; }
.tray-lang { display: flex; flex-direction: column; align-items: center; width: 40px; font-size: 12px; line-height: 17px; margin-left: 3px; }
.tray-clock { display: flex; flex-direction: column; align-items: center; width: 68px; font-size: 12px; line-height: 17px; }
.tray-note { position: relative; width: 48px; display: flex; align-items: center; justify-content: center; }
.note-badge { position: absolute; right: 9px; top: 8px; width: 16px; height: 16px; border-radius: 50%; background: #222; border: 1px solid #888; font-size: 10px; line-height: 14px; text-align: center; color: #fff; }
```
